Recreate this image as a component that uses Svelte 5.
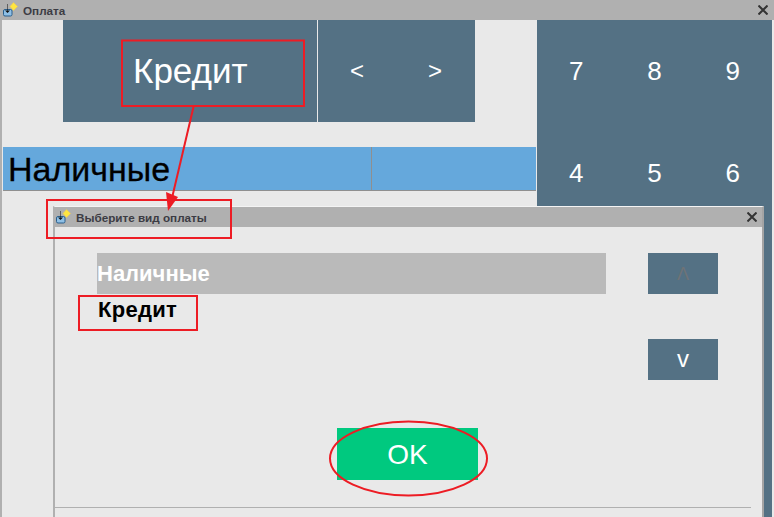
<script>
  const digits = ['7', '8', '9', '4', '5', '6', '1', '2', '3']
  let payments = ['Наличные', 'Кредит']
  let selected = 0
</script>

{#snippet appIcon()}
  <svg class="app-icon" viewBox="0 0 16 16" width="16" height="16">
    <path d="M10.500 0.500l4 4-4 4-3.500-4z" fill="#ffe640" stroke="#e6c860" stroke-width="0.8" />
    <rect x="0.500" y="7.500" width="8.500" height="6.500" rx="1.500" fill="#8fc0e6" stroke="#2a5f8c" />
    <path d="M4.500 2.500v7" fill="none" stroke="#111" stroke-width="1" stroke-dasharray="1 1" />
    <path d="M2 8.500h5l-2.500 2.500z" fill="#111" />
  </svg>
{/snippet}

{#snippet closeIcon()}
  <svg class="close" viewBox="0 0 10 10" width="10" height="10">
    <path d="M0.500 0.500l9 9M9.500 0.500l-9 9" fill="none" stroke="#333" stroke-width="2" />
  </svg>
{/snippet}

<div class="window">
  <header class="titlebar">
    {@render appIcon()}
    <span class="title">Оплата</span>
    {@render closeIcon()}
  </header>

  <div class="content">
    <div class="left">
      <div class="mode-row">
        <div class="mode-label">Кредит</div>
        <div class="mode-nav">
          <span>&lt;</span>
          <span>&gt;</span>
        </div>
      </div>
      <div class="method-row">
        <div class="method-name">Наличные</div>
        <div class="method-sum"></div>
      </div>
    </div>
    <div class="keypad">
      {#each digits as d}
        <span>{d}</span>
      {/each}
    </div>
  </div>

  <section class="dialog">
    <header class="titlebar small">
      {@render appIcon()}
      <span class="title">Выберите вид оплаты</span>
      {@render closeIcon()}
    </header>
    <div class="dialog-body">
      <div class="picker">
        <ul class="list">
          {#each payments as p, i}
            <li class:selected={i === selected}>{p}</li>
          {/each}
        </ul>
        <div class="arrows">
          <div class="arrow disabled">Λ</div>
          <div class="arrow">v</div>
        </div>
      </div>
      <div class="ok-row">
        <div class="ok">OK</div>
      </div>
      <div class="footer-line"></div>
    </div>
  </section>

  <svg class="notes" width="774" height="517" viewBox="0 0 774 517">
    <g fill="none" stroke="#ed1c24" stroke-width="2">
      <rect x="122" y="40.500" width="182" height="65.500" />
      <rect x="47" y="200" width="184" height="38" />
      <rect x="79" y="296" width="118" height="34" />
      <ellipse cx="408.500" cy="458.500" rx="78.500" ry="37" />
      <path d="M193.500 107L172 198" />
    </g>
    <path d="M168 211L166 192 178 197z" fill="#ed1c24" />
  </svg>
</div>

<style>
  :global(body) {
    margin: 0;
    background: #e9e9e9;
  }
  .window {
    position: relative;
    width: 774px;
    height: 517px;
    overflow: hidden;
    font-family: 'Liberation Sans', Arial, sans-serif;
    background: #e9e9e9;
  }
  .titlebar {
    display: flex;
    align-items: center;
    height: 20px;
    background: #b0b0b0;
    color: #333;
    padding: 0 6px 0 3px;
    gap: 4px;
  }
  .title {
    flex: 1;
    font-size: 11.700px;
    font-weight: bold;
    color: #3c3c44;
  }
  .content {
    display: flex;
    height: 497px;
    padding-left: 3px;
    box-shadow: inset 2px 0 0 #b0b0b0;
    box-sizing: border-box;
  }
  .left {
    width: 533px;
    margin-right: 1px;
  }
  .mode-row {
    display: flex;
    height: 102px;
    width: 412px;
    margin-left: 60px;
    background: #547184;
    color: #fff;
  }
  .mode-label {
    width: 254px;
    border-right: 1px solid #e9e9e9;
    font-size: 35px;
    line-height: 102px;
    text-indent: 70px;
  }
  .mode-nav {
    flex: 1;
    display: grid;
    grid-template-columns: 1fr 1fr;
    align-items: center;
    justify-items: center;
    font-size: 24px;
    padding-right: 1px;
  }
  .method-row {
    display: flex;
    height: 43px;
    margin-top: 25px;
    background: #65a8dc;
    border-bottom: 1px solid #8f8f8f;
  }
  .method-name {
    width: 363px;
    border-right: 1px solid #8f8f8f;
    color: #000;
    font-size: 34px;
    line-height: 45px;
    padding-left: 5px;
    -webkit-text-stroke: 0.3px #000;
  }
  .method-sum {
    flex: 1;
  }
  .keypad {
    width: 235px;
    display: grid;
    grid-template-columns: repeat(3, 1fr);
    grid-auto-rows: 102px;
    align-items: center;
    justify-items: center;
    background: #547184;
    color: #fff;
    font-size: 26px;
  }
  .dialog {
    position: absolute;
    left: 53px;
    top: 206px;
    width: 711px;
    height: 311px;
    box-sizing: border-box;
    border-top: 1px solid #f4f4f4;
    border-left: 2px solid #b0b0b0;
    border-right: 2px solid #a4a4a4;
    background: #e9e9e9;
  }
  .small {
    padding: 0 5px 0 1px;
  }
  .dialog-body {
    padding: 26px 0 0 42px;
  }
  .picker {
    display: flex;
    height: 175px;
  }
  .list {
    list-style: none;
    margin: 0;
    padding: 0;
    width: 509px;
  }
  .list li {
    height: 41px;
    line-height: 41px;
    font-size: 22px;
    font-weight: bold;
    color: #000;
  }
  .list li:not(.selected) {
    line-height: 31px;
    padding-left: 1px;
    letter-spacing: 0.3px;
  }
  .list li.selected {
    background: #bababa;
    color: #fff;
  }
  .arrows {
    margin-left: 42px;
    display: flex;
    flex-direction: column;
    gap: 45px;
  }
  .arrow {
    width: 70px;
    height: 41px;
    background: #547184;
    color: #fff;
    font-size: 24px;
    line-height: 39px;
    text-align: center;
  }
  .arrow.disabled {
    color: #6f7376;
    font-size: 18px;
    line-height: 43px;
  }
  .ok-row {
    margin-left: 240px;
  }
  .ok {
    width: 141px;
    height: 52px;
    background: #00c97f;
    color: #fff;
    font-size: 28px;
    line-height: 53px;
    text-align: center;
  }
  .footer-line {
    height: 1px;
    background: #b0b0b0;
    margin: 27px 11px 0 -42px;
  }
  .notes {
    position: absolute;
    left: 0;
    top: 0;
    pointer-events: none;
  }
</style>
